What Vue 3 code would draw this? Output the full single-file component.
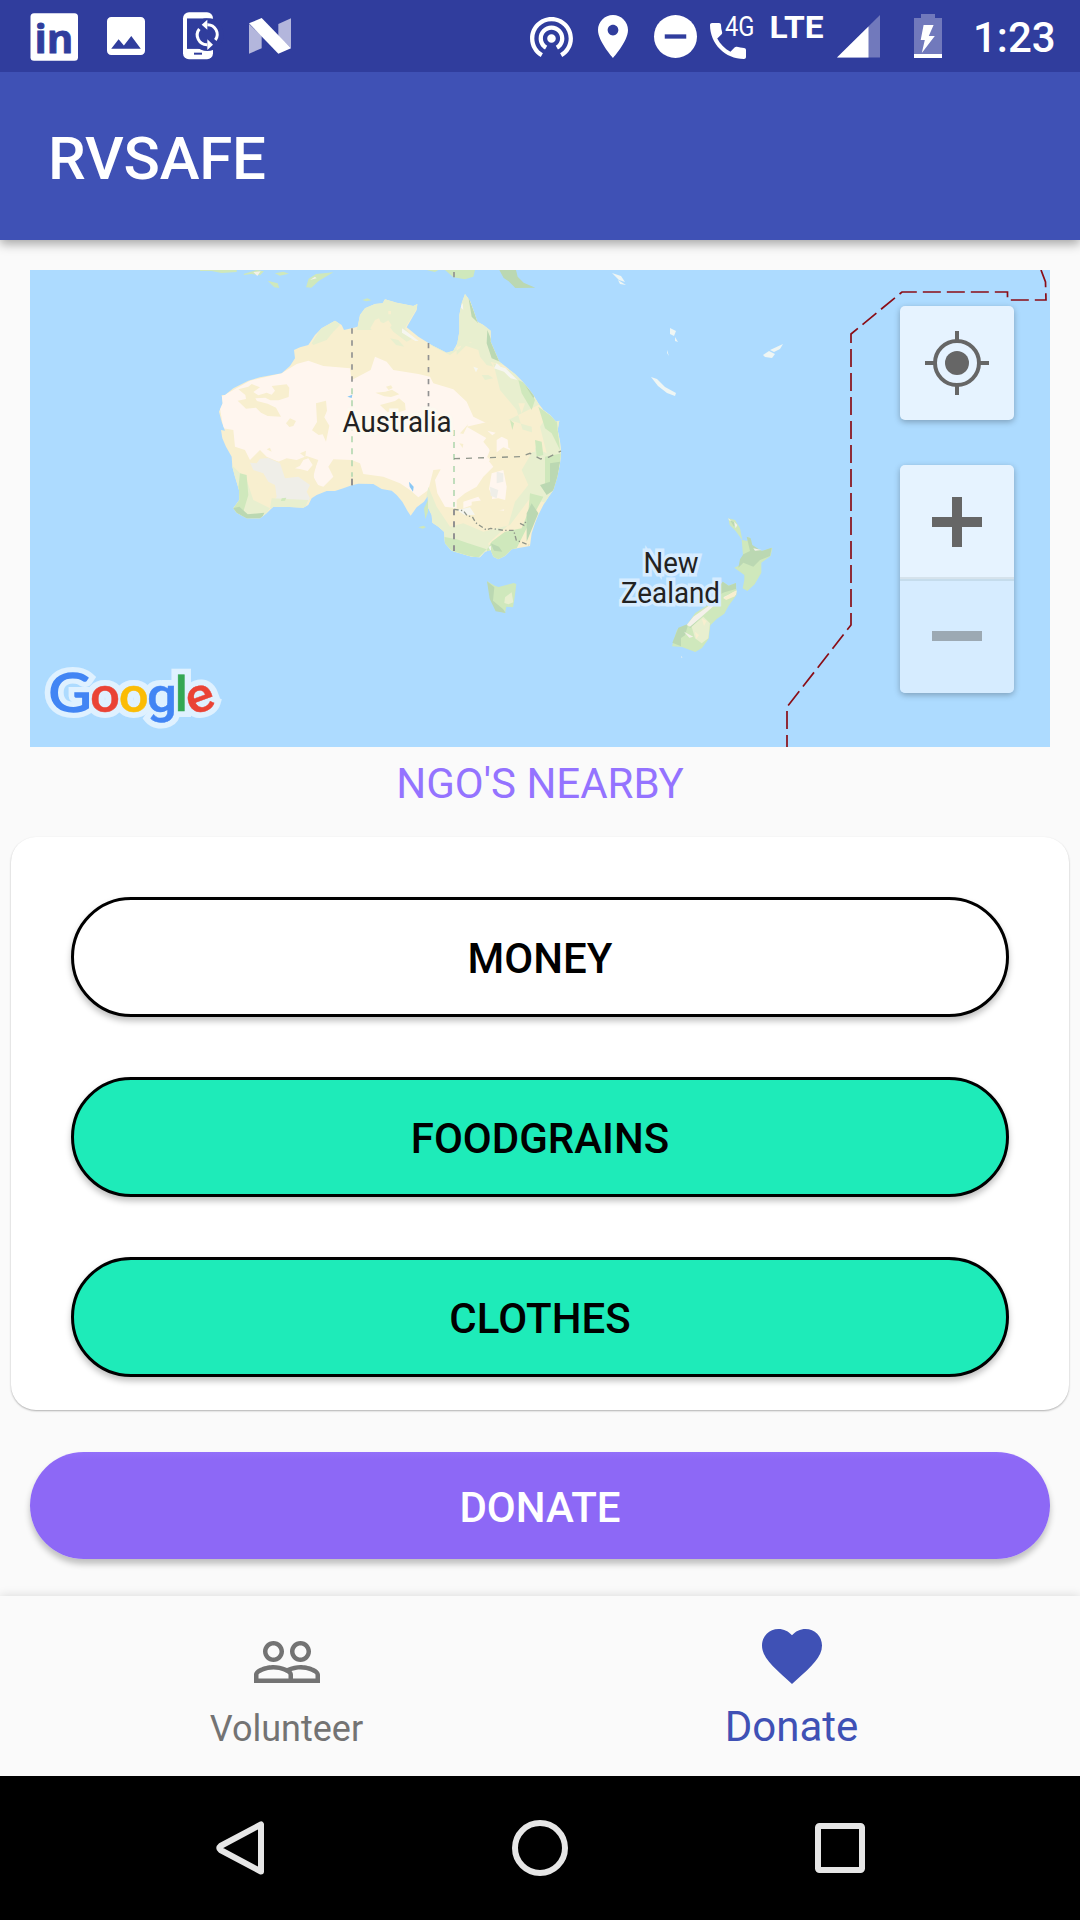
<script setup>
const options = [
  { label: 'MONEY', filled: false },
  { label: 'FOODGRAINS', filled: true },
  { label: 'CLOTHES', filled: true },
]

const brand = [
  { ch: 'G', x: 48.5, y: 711.5, size: 54, w: 43, color: '#4285f4', cap: true },
  { ch: 'o', x: 90, y: 711.5, size: 48, w: 30, color: '#ea4335' },
  { ch: 'o', x: 118.7, y: 711.5, size: 48, w: 30, color: '#fbbc05' },
  { ch: 'g', x: 147, y: 711.5, size: 48, w: 30, color: '#4285f4' },
  { ch: 'l', x: 174.5, y: 711, size: 48, w: 13.5, color: '#34a853' },
  { ch: 'e', x: 186, y: 711.5, size: 48, w: 28, color: '#ea4335', turn: 'rotate(-20 200.5 699)' },
]
</script>

<template>
  <div class="screen">
    <header class="status">
      <svg style="margin-left: 30px" width="49" height="49" viewBox="30 11 49 49">
        <rect x="30.5" y="12.3" width="47.5" height="47.5" rx="3.5" fill="#fff" />
        <text x="34.5" y="52.2" class="in" textLength="39" lengthAdjust="spacingAndGlyphs">in</text>
      </svg>
      <svg style="margin-left: 28px" width="38" height="38" viewBox="3 3 18 18">
        <path fill="#fff" d="M21 19V5c0-1.100-.9-2-2-2H5c-1.100 0-2 .9-2 2v14c0 1.100.9 2 2 2h14c1.100 0 2-.9 2-2zM8.500 13.500l2.500 3.010L14.500 12l4.500 6H5l3.500-4.500z" />
      </svg>
      <svg style="margin-left: 38px" width="37" height="48" viewBox="549 36 111 144">
        <rect x="549" y="37" width="90" height="141" rx="18" fill="#fff" />
        <path d="M561 56h80v90h-80z" fill="#303d9d" />
        <circle cx="622" cy="104" r="49" fill="#303d9d" />
        <path d="M561 56h60v90h-60z" fill="#303d9d" />
        <path d="M582 158h24v6h-24z" fill="#303d9d" />
        <path d="M598 87a29 29 0 0 0 24 47M646 120a29 29 0 0 0-24-46" fill="none" stroke="#fff" stroke-width="9" />
        <path d="M622 59l-17 15 17 15zM622 118l17 16-17 16z" fill="#fff" />
      </svg>
      <svg style="margin-left: 29px" width="42" height="36" viewBox="747 54 126 108">
        <path d="M747 72l38 36v37l-38 16zM835 72l38-17v90l-38-37z" fill="#b3b6dc" />
        <path d="M747 70l38-16 88 91-38 16z" fill="#fff" />
      </svg>
      <span class="grow"></span>
      <svg width="43" height="40" viewBox="2 3 20 18.650" style="margin-top: 2px">
        <path fill="#fff" d="M12 11c-1.100 0-2 .9-2 2s.9 2 2 2 2-.9 2-2-.9-2-2-2zm6 2c0-3.310-2.690-6-6-6s-6 2.690-6 6c0 2.220 1.210 4.150 3 5.190l1-1.740c-1.190-.7-2-1.970-2-3.450 0-2.210 1.790-4 4-4s4 1.790 4 4c0 1.480-.81 2.750-2 3.450l1 1.740c1.790-1.040 3-2.970 3-5.190zM12 3C6.480 3 2 7.480 2 13c0 3.700 2.010 6.920 4.990 8.650l1-1.730C5.610 18.530 4 15.960 4 13c0-4.420 3.580-8 8-8s8 3.580 8 8c0 2.960-1.610 5.530-4 6.920l1 1.730c2.990-1.730 5-4.950 5-8.650 0-5.520-4.480-10-10-10z" />
      </svg>
      <svg style="margin-left: 25px" width="30" height="43" viewBox="5 2 14 20" preserveAspectRatio="none">
        <path fill="#fff" d="M12 2C8.130 2 5 5.130 5 9c0 5.250 7 13 7 13s7-7.750 7-13c0-3.870-3.130-7-7-7zm0 9.500c-1.380 0-2.500-1.120-2.500-2.500s1.120-2.500 2.500-2.500 2.500 1.120 2.500 2.500-1.120 2.500-2.500 2.500z" />
      </svg>
      <svg style="margin-left: 26px" width="43" height="43" viewBox="2 2 20 20">
        <circle cx="12" cy="12" r="10" fill="#fff" />
        <path d="M7 11h10v2H7z" fill="#303d9d" />
      </svg>
      <svg style="margin-left: 13px" width="112" height="48" viewBox="710 12 112 48">
        <path transform="translate(704 17) scale(2)" fill="#fff" d="M20 15.500c-1.250 0-2.450-.2-3.570-.57-.35-.11-.74-.03-1.020.24l-2.200 2.200c-2.830-1.440-5.150-3.750-6.590-6.580l2.200-2.210c.28-.27.36-.66.25-1.010C8.700 6.450 8.500 5.250 8.500 4c0-.55-.45-1-1-1H4c-.55 0-1 .45-1 1 0 9.390 7.610 17 17 17 .55 0 1-.45 1-1v-3.500c0-.55-.45-1-1-1z" />
        <text class="g4" x="725" y="36" textLength="29.5" lengthAdjust="spacingAndGlyphs">4G</text>
        <text class="lte" x="769.500" y="38" textLength="54" lengthAdjust="spacingAndGlyphs">LTE</text>
      </svg>
      <svg style="margin-left: 15px" width="43" height="43" viewBox="837 16.500 43 43">
        <path d="M880 16.500v42.500h-43z" fill="#7179bc" />
        <path d="M868.500 28v31H837z" fill="#fff" />
      </svg>
      <svg style="margin-left: 34px" width="28" height="44" viewBox="914 14 28 44">
        <path d="M921 14h14v4h7v40h-28V18h7z" fill="#7179bc" />
        <path d="M914 54h28v4h-28zM923.600 25h10l-4.800 11h6l-13 17 3-13h-4.100z" fill="#fff" />
      </svg>
      <time class="clock">1:23</time>
    </header>

    <div class="appbar"><h1>RVSAFE</h1></div>

    <main>
      <section class="map">
        <svg width="1020" height="477" viewBox="30 270 1020 477">
          <rect x="30" y="270" width="1020" height="477" fill="#addbff" />
          <g transform="translate(200 260) scale(.33333)">
            <defs>
              <clipPath id="land">
                <path d="M795 102L810 122 820 150 832 185 850 195 872 212 872 245 885 275 898 305 920 322 945 342 968 365 985 385 1000 405 1015 430 1030 450 1050 465 1068 485 1078 482 1073 510 1080 545 1083 575 1080 610 1072 650 1060 690 1045 712 1030 735 1015 765 1005 790 995 820 990 858 960 863 935 868 915 888 895 898 880 890 872 870 855 875 840 892 815 890 780 880 755 872 735 850 732 815 715 800 697 788 695 765 685 745 683 708 672 725 650 742 632 767 622 752 607 725 590 705 575 692 545 687 520 672 475 671 455 676 430 685 405 693 380 693 350 705 335 715 325 735 310 743 270 741 220 740 200 760 180 775 140 775 110 758 100 745 118 720 117 690 105 650 97 620 95 590 78 560 67 535 63 510 75 512 65 485 57 455 68 430 65 405 75 405 100 385 145 362 180 352 245 340 270 318 285 295 282 270 300 262 325 255 345 225 365 205 405 182 425 195 432 210 455 205 473 200 480 165 495 145 525 132 548 130 555 118 590 128 640 138 652 132 650 150 620 202 655 230 700 258 740 278 760 272 772 250 778 215 778 165 785 130z" />
              </clipPath>
            </defs>
            <g clip-path="url(#land)">
              <rect x="40" y="90" width="1060" height="820" fill="#f8efcf" />
              <path fill="#fff6ef" d="M55 415L150 362 245 340 290 312 325 302 370 318 450 325 455 360 512 330 525 290 560 305 580 330 655 342 690 350 700 370 760 388 800 425 820 470 860 490 870 520 850 545 870 570 860 595 880 620 850 650 830 680 795 700 770 720 770 745 735 740 712 700 705 660 722 628 700 630 685 690 655 712 630 690 600 670 550 650 490 642 480 610 455 600 400 598 385 620 400 650 370 680 345 672 340 640 355 600 320 588 290 600 260 595 235 605 200 590 180 570 150 600 135 570 105 560 100 510 70 505z" />
              <path fill="#f8efcf" d="M115 388l30-8 10-8 25 10-20 14 15 10 25-8 15 6 10-12-10-14 45-5 8 10-2 28-30 10-25 0-15-8-30 2 5 8 32 8 25 12 15 27-40-2-20-10-15-15-30 3-25-24 25-5-2-12zM348 430l30-8 3 30-8 20 15 25-10 48-10-22-12 2-20-14 15-25zM558 380l15-4 5 8-12 6zM526 398l30-3 20-6 22 14-25 8-20-2zM540 435l45-12 12-8 18 15 2 20-25 8-10-6-20 4zM258 490l12-15 18 8-8 15-12 3zM762 380l12-4 2 8zM780 520l25-28-15 30zM778 550l12 2-2 12zM150 605l70-5 60 20 50-25 20 15-10 40 20 35-25 25-60-30-50 5-60-15-20-35zM200 568l10-5 5 12zM300 580l18-8-2 20zM800 500l65-15 40 20 30-15 40 15 30 40-30 40-60 10-45-20-10-40z" />
              <path fill="#fff6ef" d="M890 540l15-10 30 15-5 25-20-8-20 15zM862 512l25 6-10 8zM862 590l8 10-10 12zM285 625l15-8 10-17 15-5 13 20-15 18-20-5zM875 640l35-10 10 50-8 72-40-5 5-40-10-20zM790 725l45-15 10 15-55 20z" />
              <path fill="#efeee8" d="M150 608l20 2 10-14 25-2 35 16 15 45 40-5 35 25-10 20 10 20-15 25-35-15-30 20-35-15 15-20-5-35-20-10-15-25-30-10zM890 635l20 5v25l-20 5zM870 680l25 10-5 25-18-8z" />
              <path fill="#e8efcf" d="M470 210L480 150 550 112 660 130 615 205 640 235 620 245 580 215 565 195 540 185 525 210zM570 235l25 5 18 20-25-5zM335 250l30-50 40-25 15 20-20 20-20 25-40 15zM690 255l60 30 30-20 10-20 50 5 40 70-20-5-20-25-5-20-45-15-30 10zM770 285V150l25-55 45 80 40 30 30 110-40-10-30-50-30-10zM845 345l20 0 15 10-25 5zM880 310l70 30 60 80 30 50-20 30 20 80-60-30-30-100-50-60zM925 480l70 20 5 70-35 60 20 45-40 50-20 70-60 55 10 60h150l100-320-20-90-80-70zM90 610l50 50 20 60 50 25-30 40-90-30zM215 715l110 5-10 25-105 0zM685 680l25 60 40 60 40-10 60 25 80-20 60-80 70 20-30 190-110 30-180-50-70-150z" />
              <path fill="#f8efcf" d="M525 180l12-5 8 18 20-12 10 15-10 15-20 8 3 18-22-12-15-20zM565 153h8v10h-8zM955 430h20l-10 30zM920 500l35 5 50 15v55l-45 8-35-20zM815 725l80-10 40 10-5 20-55 10-60-10z" />
              <path fill="#cfe8bc" d="M955 360l20 10 30 50-10 30-30-50zM1015 440l55 40 10 90-25-50-20-15zM1005 540l20 5 5 40-20 5zM1035 590l50-10-20 110-30-20zM930 480l12 10-5 20zM990 700l40 10-50 95-30 60-60 40-30-35 15-25 40-30 50-10 20-50zM730 830l40 8 30 10 60 20-25 25-120-20zM120 640l20 5 5 60-15 50 35 20-50 5-25-35 20-20zM245 715l14-2-4 9-12 1z" />
              <path fill="#bbd8b2" d="M805 110l20 50 10 30-20-20zM862 210l12 30 26 65-25-10-15-45zM1050 610l30-5-10 80-30 20-20-30 30-10zM975 375l30 30-5 10zM98 745l20-5 25 23 50-5-10 22-70-5zM872 850l25 10 10 15-25-3zM980 760l15-30 20 30-35 85z" />
              <path fill="#f6f6f0" d="M780 140l8-10 2 20zM606 205l15 10 35 28-10 0-40-25zM890 310l12 10 15 5 35 35-20-5-20-20-30-10zM820 320l14 5-6 12zM1040 440l6 18-10-8zM770 750l40-8 15 22-30 2zM865 860l8-2v18z" />
            </g>
            <path d="M442 410l15-6-2 10zM627 665l14 15-2 15-10-15z" fill="#8bc8f5" />
            <g fill="#cfe8bc">
              <path d="M672 745l12-25v35l-8 22zM655 802l15-5 8 5-10 4zM487 120l15-5 12 6-15 3zM0 30h110v6l-45 3-30-6H0zM130 42l40-12 22 4-12 12-25-4-22 3zM225 40l25-5 17 6-28 6zM203 62l30 8 5 14-15-2zM318 82l8-26 22-14 52-5-24 14-20 12-22 20zM290 38l25-5M680 30h35l-10 6zM735 30h90l-5 20-25 8-35-6z" />
            </g>
            <path d="M898 30h50l5 20 18 18 35 15-60 1-20-20-15-10z" fill="#bbd8b2" />
            <path d="M160 36l22-2-10 14zM330 60l15-10 5 5z" fill="#f4f1ea" />
            <path d="M861 964l25 14 10 3 45-12 8 3-5 40-5 30-20-2-4 20-25-10-18-38z" fill="#cfe8bc" />
            <path d="M861 964l22 18-4 40 30 25 8 12-30-5-18-38z" fill="#bbd8b2" />
            <path d="M915 1012l20-15 5 30-15 6-12-4z" fill="#e8efcf" />
            <path d="M762 52V30M456 205V370M685.500 249V450" fill="none" stroke="#929292" stroke-width="5" stroke-dasharray="16 20" />
            <path d="M456 385V650" fill="none" stroke="#b5d8b2" stroke-width="5" stroke-dasharray="18 18" />
            <path d="M456 656V676" fill="none" stroke="#929292" stroke-width="6" />
            <path d="M762 510V740" fill="none" stroke="#b5d8b2" stroke-width="5" stroke-dasharray="18 18" />
            <path d="M762 748V873" fill="none" stroke="#929292" stroke-width="6" stroke-dasharray="18 18" />
            <path d="M762 596L960 590 990 580 1022 597 1045 592 1083 573" fill="none" stroke="#8f958a" stroke-width="4" stroke-dasharray="18 18" />
            <path d="M762 748l28 4 12 16 15 2 10 18 32 22 12-5 40 6h30l8 30 38 14M960 790l12 6 6-12" fill="none" stroke="#8f958a" stroke-width="4" stroke-dasharray="14 7 4 7" />
          </g>

          <g transform="translate(580 480) scale(.33333)">
            <path fill="#cfe8bc" d="M445 115l20 5 15 25 7 35 15 3 5-15 10 35 30 10 30-10-5 25-28 20v30l-20 35-22 20-14-8 5-25v-15l-30-22 22-10 5-15-5-60-18-25-18-18zM428 305l18 12 22-8 2 35-25 35-12 22-22 15-20 20-5 40-20 28-20 12-40-15-30-2 15-50 30-15 25-35 55-35z" />
            <path fill="#bbd8b2" d="M450 120l15 8-3 12zM500 170l12 5 5 20 28 18 30-10-5 25-30 12-20 20-30-12-15 15 5-25 10-15 20-10zM428 305l18 12 22-8v18l-35 10-30 15 5-20zM277 488l18-45 30-12-10 35-12 8v25zM325 435l55-50 15-5-65 65z" />
            <path fill="#e8efcf" d="M335 440l35-30 20 20-5 45-20 15-20-15z" />
            <path fill="#f4f1ea" d="M320 435l20-25 50-35 20-5-50 45-30 25zM462 125l10 10-5 10zM430 352l40-20-2 12-30 15zM445 115l10 8-8-2zM303 527l5 8-5-3zM312 455l28 15-12 3zM520 205l25 5-20 2z" />
            <path fill="#f8efcf" d="M430 355l28-18 12-6-5 18-25 10zM365 415l15 8-8 15zM345 455l12 10-8 12z" />
          </g>

          <path fill="#eff6f4" d="M651 377l6 2 8 8 11 6-1 3-8-3-9-7zM670 328l6 3-2 5-4-2zM675 337l3 5-3-1zM667 350l2 6-2-3zM763 355l6-4 6 3-3 4-7-1zM770 350l13-6-3 5-6 3zM612 273l9 3 4 6-6-2zM618 280l8 5-6-1z" />
          <path class="dateline" d="M1041 270l4.500 12 .5 18h-38.500v-8H902l-51 42V625L787 707V747" />

          <text class="place light" x="342.500" y="432" textLength="109" lengthAdjust="spacingAndGlyphs">Australia</text>
          <text class="place" x="643.500" y="572.500" textLength="55" lengthAdjust="spacingAndGlyphs">New</text>
          <text class="place" x="621" y="603" textLength="99" lengthAdjust="spacingAndGlyphs">Zealand</text>

          <g class="brand">
            <text v-for="(l, i) in brand" :key="'h' + i" class="halo" :class="{ cap: l.cap }" :x="l.x" :y="l.y" :font-size="l.size" :textLength="l.w" :transform="l.turn" lengthAdjust="spacingAndGlyphs" aria-hidden="true">{{ l.ch }}</text>
            <text v-for="(l, i) in brand" :key="'l' + i" :class="{ cap: l.cap }" :x="l.x" :y="l.y" :font-size="l.size" :textLength="l.w" :transform="l.turn" lengthAdjust="spacingAndGlyphs" :fill="l.color" :stroke="l.color">{{ l.ch }}</text>
          </g>
        </svg>

        <div class="controls">
          <button class="ctl locate">
            <svg width="64" height="64" viewBox="-32 -32 64 64">
              <circle r="22" fill="none" stroke="#666" stroke-width="4" />
              <circle r="12" fill="#666" />
              <path d="M0-32v9M0 23v9M-32 0h9M23 0h9" stroke="#666" stroke-width="4" />
            </svg>
          </button>
          <div class="zoom">
            <button class="ctl in-btn">
              <svg width="50" height="50"><path d="M20 0h10v20h20v10H30v20H20V30H0V20h20z" fill="#666" /></svg>
            </button>
            <button class="ctl out-btn">
              <svg width="50" height="10"><path d="M0 0h50v10H0z" fill="#9ca9b3" /></svg>
            </button>
          </div>
        </div>
      </section>

      <h2>NGO'S NEARBY</h2>

      <section class="card">
        <button v-for="o in options" :key="o.label" class="option" :class="{ filled: o.filled }">{{ o.label }}</button>
      </section>

      <button class="donate">DONATE</button>
    </main>

    <nav class="tabs">
      <a class="tab">
        <svg width="72" height="72" viewBox="0 0 24 24">
          <path fill="#737373" d="M16.500 13c-1.200 0-3.070.34-4.500 1-1.430-.67-3.300-1-4.500-1C5.330 13 1 14.080 1 16.250V19h22v-2.750c0-2.170-4.330-3.250-6.500-3.250zm-4 4.500h-10v-1.250c0-.54 2.560-1.750 5-1.750s5 1.210 5 1.750v1.250zm9 0H14v-1.250c0-.46-.2-.86-.52-1.220.88-.3 1.960-.53 3.020-.53 2.440 0 5 1.210 5 1.750v1.250zM7.500 12c1.930 0 3.500-1.570 3.500-3.500S9.430 5 7.500 5 4 6.570 4 8.500 5.570 12 7.500 12zm0-5.500c1.100 0 2 .9 2 2s-.9 2-2 2-2-.9-2-2 .9-2 2-2zm9 5.500c1.930 0 3.500-1.570 3.500-3.500S18.430 5 16.500 5 13 6.570 13 8.500s1.570 3.500 3.500 3.500zm0-5.500c1.100 0 2 .9 2 2s-.9 2-2 2-2-.9-2-2 .9-2 2-2z" />
        </svg>
        <span>Volunteer</span>
      </a>
      <a class="tab active">
        <svg width="72" height="72" viewBox="0 0 24 24">
          <path fill="#3f51b5" d="M12 21.350l-1.450-1.320C5.400 15.360 2 12.280 2 8.500 2 5.420 4.420 3 7.500 3c1.740 0 3.410.81 4.500 2.090C13.090 3.810 14.760 3 16.500 3 19.580 3 22 5.420 22 8.500c0 3.780-3.400 6.860-8.550 11.540L12 21.350z" />
        </svg>
        <span>Donate</span>
      </a>
    </nav>

    <footer class="sysnav">
      <svg width="48" height="56"><path d="M45 4.500v47L4.500 30q-2.500-2 0-4z" /></svg>
      <svg width="56" height="56"><circle cx="28" cy="28" r="25" /></svg>
      <svg width="50" height="50"><rect x="3" y="3" width="44" height="44" rx="1.500" /></svg>
    </footer>
  </div>
</template>

<style>
body {
  margin: 0;
  background: #fafafa;
}
</style>

<style scoped>
.screen {
  width: 1080px;
  height: 1920px;
  display: flex;
  flex-direction: column;
  overflow: hidden;
  background: #fafafa;
  font-family: Roboto, sans-serif;
}
svg {
  display: block;
  flex: none;
}
.status svg {
  overflow: visible;
}
button {
  font-family: inherit;
  padding: 0;
  border: 0;
}
.status {
  height: 72px;
  flex: none;
  position: relative;
  z-index: 2;
  display: flex;
  align-items: center;
  background: #303d9d;
  color: #fff;
}
.grow {
  flex: 1;
}
.in {
  font: 700 39.500px "Open Sans", sans-serif;
  fill: #303d9d;
  stroke: #303d9d;
  stroke-width: 0.8;
}
.g4 {
  font-size: 27px;
  fill: #fff;
}
.lte {
  font-size: 32px;
  font-weight: 700;
  fill: #fff;
}
.clock {
  width: 84px;
  margin-left: 31px;
  margin-right: 23px;
  font-size: 42px;
  font-weight: 500;
  line-height: 72px;
  margin-top: 3px;
}
.appbar {
  height: 168px;
  flex: none;
  position: relative;
  display: flex;
  align-items: center;
  padding-left: 48px;
  background: #3f51b5;
  box-shadow: 0 4px 10px rgba(0, 0, 0, 0.34);
}
h1 {
  margin: 5px 0 0;
  color: #fff;
  font-size: 60px;
  font-weight: 500;
  line-height: 70px;
  letter-spacing: -0.2px;
}
main {
  flex: 1;
  display: flex;
  flex-direction: column;
  padding-top: 30px;
}
.map {
  position: relative;
  width: 1020px;
  height: 477px;
  margin: 0 30px;
}
.dateline {
  fill: none;
  stroke: #8a0d16;
  stroke-width: 1.700;
  stroke-dasharray: 18 6;
}
.place {
  font-size: 29.500px;
  fill: #222;
  stroke: #d6ecff;
  stroke-width: 7;
  paint-order: stroke;
}
.place.light {
  stroke: #fdf9f0;
}
.brand {
  font-weight: 500;
  stroke-width: 0.4;
}
.brand .cap {
  font-family: Lato, sans-serif;
  font-weight: 400;
  stroke-width: 1.6;
}
.brand .halo,
.brand .halo.cap {
  fill: #dff1ff;
  stroke: #dff1ff;
  stroke-width: 12;
}
.controls {
  position: absolute;
  top: 36px;
  right: 36px;
  display: flex;
  flex-direction: column;
  gap: 45px;
}
.ctl {
  width: 114px;
  height: 114px;
  display: flex;
  align-items: center;
  justify-content: center;
  background: #e6f3ff;
}
.locate,
.zoom {
  border-radius: 5px;
  box-shadow: 0 2px 6px rgba(0, 0, 0, 0.28);
}
.zoom {
  overflow: hidden;
}
.in-btn {
  border-bottom: 2px solid #d5e2ec;
  box-sizing: border-box;
  padding-top: 2px;
}
.out-btn {
  background: #d6ecff;
  border-top: 2px solid #c5dcec;
  box-sizing: border-box;
  padding-bottom: 2px;
}
h2 {
  margin: 11px 0 0;
  height: 79px;
  text-align: center;
  font-size: 42px;
  font-weight: 400;
  line-height: 52px;
  color: #9473ff;
}
.card {
  height: 573px;
  box-sizing: border-box;
  margin: 0 11px;
  padding: 60px 60px 0;
  display: flex;
  flex-direction: column;
  gap: 60px;
  background: #fff;
  border-radius: 25px;
  box-shadow: 0 1px 2px rgba(0, 0, 0, 0.3);
}
.option {
  height: 120px;
  flex: none;
  box-sizing: border-box;
  border: 3px solid #000;
  border-radius: 60px;
  background: #fff;
  color: #000;
  font-size: 42px;
  font-weight: 500;
  padding-top: 3px;
  box-shadow: 0 4px 6px rgba(0, 0, 0, 0.25);
}
.option.filled {
  background: #1eebb9;
}
.donate {
  height: 107px;
  margin: 42px 30px 0;
  border-radius: 54px;
  background: linear-gradient(#926ffa, #8d68f6 8px);
  color: #fff;
  font-size: 42px;
  font-weight: 500;
  padding-top: 3px;
  box-shadow: 0 5px 6px rgba(0, 0, 0, 0.24);
}
.tabs {
  height: 180px;
  flex: none;
  display: flex;
  justify-content: center;
  padding-right: 2px;
  background: #fafafa;
  box-shadow: 0 0 10px rgba(0, 0, 0, 0.14);
}
.tab {
  width: 505px;
  display: flex;
  flex-direction: column;
  align-items: center;
  padding-top: 30px;
  box-sizing: border-box;
  color: #737373;
  font-size: 36px;
  line-height: 42px;
}
.tab span {
  margin-top: 10px;
}
.tab.active {
  padding-top: 24px;
  color: #3f51b5;
  font-size: 42px;
  line-height: 50px;
}
.sysnav {
  height: 144px;
  flex: none;
  display: flex;
  align-items: center;
  justify-content: space-between;
  box-sizing: border-box;
  padding: 0 215px 0 216px;
  background: #000;
}
.sysnav svg {
  fill: none;
  stroke: #e6e6e6;
  stroke-width: 6;
  stroke-linejoin: round;
}
</style>
